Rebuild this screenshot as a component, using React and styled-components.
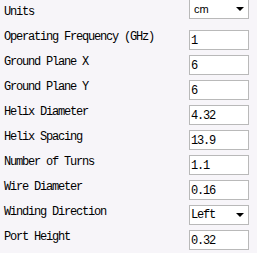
import React from 'react';
import styled, { createGlobalStyle } from 'styled-components';

const GlobalStyle = createGlobalStyle`
  html, body {
    margin: 0;
    padding: 0;
    background: #f7f5f9;
    overflow: hidden;
  }
`;

const Form = styled.div`
  display: flex;
  flex-direction: column;
  gap: 5px;
  padding: 5px 0 0 4px;
  width: 253px;
  height: 253px;
  box-sizing: border-box;
`;

const Row = styled.div`
  display: grid;
  grid-template-columns: 185px 60px;
  align-items: start;
  height: 20px;
`;

const Label = styled.span`
  font-family: "Liberation Mono", "DejaVu Sans Mono", monospace;
  font-size: 12px;
  letter-spacing: -1.2px;
  line-height: 14px;
  color: #000;
  white-space: pre;
`;

const Field = styled.div`
  height: 20px;
  box-sizing: border-box;
  border: 1px solid #b9b9b9;
  background: #fff;
  display: flex;
  align-items: center;
  padding: 1px 0 0 1px;
  font-family: "Liberation Mono", "DejaVu Sans Mono", monospace;
  font-size: 12px;
  letter-spacing: -1.2px;
  color: #000;
`;

const Select = styled(Field)`
  justify-content: space-between;
  padding: 0 4px 0 ${p => p.$pad}px;
  margin-top: ${p => p.$shift}px;
  font-family: ${p => (p.$sans ? '"Liberation Sans", Arial, sans-serif' : '"Liberation Mono", monospace')};
  font-size: ${p => (p.$sans ? 11 : 12)}px;
  letter-spacing: ${p => (p.$sans ? 0 : -1.2)}px;
`;

const Arrow = () => (
  <svg width="8" height="4" viewBox="0 0 8 4">
    <polygon points="0,0 8,0 4,4" fill="#000" />
  </svg>
);

const rows = [
  { label: 'Operating Frequency (GHz)', value: '1' },
  { label: 'Ground Plane X', value: '6' },
  { label: 'Ground Plane Y', value: '6' },
  { label: 'Helix Diameter', value: '4.32' },
  { label: 'Helix Spacing', value: '13.9' },
  { label: 'Number of Turns', value: '1.1' },
  { label: 'Wire Diameter', value: '0.16' },
];

export default function App() {
  return (
    <>
      <GlobalStyle />
      <Form>
        <Row>
          <Label>Units</Label>
          <Select $sans $pad={4} $shift={-6}>
            <span>cm</span>
            <Arrow />
          </Select>
        </Row>
        {rows.map(r => (
          <Row key={r.label}>
            <Label>{r.label}</Label>
            <Field>{r.value}</Field>
          </Row>
        ))}
        <Row>
          <Label>Winding Direction</Label>
          <Select $pad={1} $shift={0}>
            <span>Left</span>
            <Arrow />
          </Select>
        </Row>
        <Row>
          <Label>Port Height</Label>
          <Field>0.32</Field>
        </Row>
      </Form>
    </>
  );
}
